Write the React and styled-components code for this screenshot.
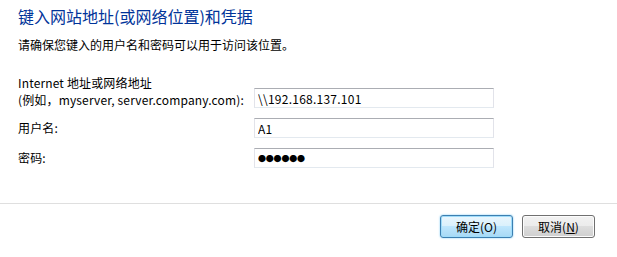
import React from "react";
import styled, { createGlobalStyle } from "styled-components";

const FONT = `"Noto Sans CJK SC", "Noto Sans", sans-serif`;

const Global = createGlobalStyle`
  html, body { margin: 0; padding: 0; background: #ffffff; }
  body {
    font-family: ${FONT};
    font-size: 12px;
    color: #000;
  }
`;

const Dialog = styled.div`
  width: 617px;
  height: 257px;
  display: flex;
  flex-direction: column;
  background: #ffffff;
`;

const Content = styled.div`
  padding: 5px 18px 0 18px;
  height: 198px;
  box-sizing: border-box;
`;

const Title = styled.h1`
  margin: 0;
  font-size: 16px;
  line-height: 22px;
  font-weight: normal;
  color: #003399;
`;

const Intro = styled.p`
  margin: 10px 0 0 0;
  font-size: 12px;
  line-height: 16px;
`;

const Form = styled.div`
  margin-top: 21px;
  display: grid;
  grid-template-columns: 236px 240px;
  row-gap: 10px;
  align-items: center;
`;

const Label = styled.label`
  font-size: 12px;
  line-height: 17px;
  letter-spacing: 0.15px;
  align-self: ${(p) => (p.$bottom ? "end" : "center")};
  margin-bottom: ${(p) => (p.$bottom ? "0" : "2px")};
  white-space: nowrap;
`;

const Field = styled.input`
  box-sizing: border-box;
  width: 240px;
  height: 20px;
  margin: 0;
  padding: 0 3px;
  align-self: ${(p) => (p.$bottom ? "end" : "center")};
  border: 1px solid #dbdfe6;
  border-top-color: #abadb3;
  border-left-color: #e2e3ea;
  border-right-color: #e2e3ea;
  border-bottom-color: #e3e9ef;
  background: #fff;
  font-family: ${FONT};
  font-size: 12px;
  letter-spacing: 0.25px;
  color: #000;
  outline: none;
`;

const DotField = styled(Field)`
  font-size: 8px;
  letter-spacing: -0.2px;
`;

const Separator = styled.div`
  height: 1px;
  background: #dfdfdf;
  margin-top: 5px;
`;

const Footer = styled.div`
  display: flex;
  justify-content: flex-end;
  gap: 9px;
  padding: 11px 22px 0 0;
`;

const Button = styled.button`
  box-sizing: border-box;
  width: 73px;
  height: 23px;
  margin: 0;
  padding: 0;
  border-radius: 3px;
  font-family: ${FONT};
  font-size: 12px;
  line-height: 19px;
  color: #000;
  border: 1px solid ${(p) => (p.$default ? "#3c7fb1" : "#707070")};
  background: ${(p) =>
    p.$default
      ? "linear-gradient(to bottom, #eaf6fd 0%, #d9f0fc 50%, #bee6fd 50%, #a7d9f5 100%)"
      : "linear-gradient(to bottom, #f2f2f2 0%, #ebebeb 50%, #dddddd 50%, #cfcfcf 100%)"};
  box-shadow: ${(p) =>
    p.$default
      ? "inset 0 0 0 1px #9fdcfa, 0 0 2px #6fc4f2"
      : "inset 0 0 0 1px #fcfcfc"};
`;

const Key = styled.u`
  text-decoration: underline;
`;

export default function App() {
  return (
    <>
      <Global />
      <Dialog>
        <Content>
          <Title>键入网站地址(或网络位置)和凭据</Title>
          <Intro>请确保您键入的用户名和密码可以用于访问该位置。</Intro>
          <Form>
            <Label $bottom htmlFor="addr">
              Internet 地址或网络地址
              <br />
              (例如，myserver, server.company.com):
            </Label>
            <Field $bottom id="addr" readOnly value="\\192.168.137.101" />
            <Label htmlFor="user">用户名:</Label>
            <Field id="user" readOnly value="A1" />
            <Label htmlFor="pwd">密码:</Label>
            <DotField id="pwd" readOnly value="●●●●●●" />
          </Form>
        </Content>
        <Separator />
        <Footer>
          <Button $default>确定(O)</Button>
          <Button>
            取消(<Key>N</Key>)
          </Button>
        </Footer>
      </Dialog>
    </>
  );
}
